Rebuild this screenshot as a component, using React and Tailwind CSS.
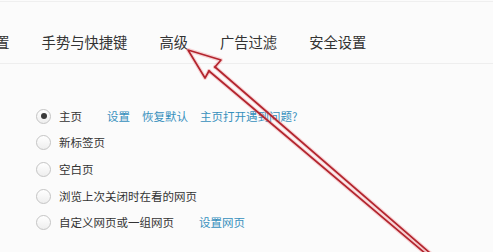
import React from "react";

const tabs = ["设置", "手势与快捷键", "高级", "广告过滤", "安全设置"];

const options = [
  { label: "主页", checked: true, links: ["设置", "恢复默认", "主页打开遇到问题?"] },
  { label: "新标签页" },
  { label: "空白页" },
  { label: "浏览上次关闭时在看的网页" },
  { label: "自定义网页或一组网页", links: ["设置网页"] },
];

function Radio({ checked }) {
  return (
    <span className="w-[15px] h-[15px] rounded-full border border-[#c4c4c4] bg-gradient-to-b from-white to-[#eeeeee] flex items-center justify-center shrink-0">
      {checked && <span className="w-[6px] h-[6px] rounded-full bg-[#3a3a3a]" />}
    </span>
  );
}

function Arrow() {
  return (
    <svg className="absolute inset-0 pointer-events-none" width="493" height="252" viewBox="0 0 493 252">
      <g fill="none" strokeLinejoin="round" strokeLinecap="round">
        <g stroke="rgba(235,90,100,0.25)" strokeWidth="4">
          <path d="M209 71 L205 78 L188 50 L221 60 L215 67" />
          <path d="M209 71 L426 254" />
          <path d="M215 67 L430 253" />
        </g>
        <g stroke="#b3252e" strokeWidth="1.7">
          <path d="M209 71 L205 78 L188 50 L221 60 L215 67" />
          <path d="M209 71 L426 254" />
          <path d="M215 67 L430 253" />
        </g>
      </g>
    </svg>
  );
}

export default function App() {
  return (
    <div
      className="relative w-[493px] h-[252px] overflow-hidden bg-[#fbfbfb] text-[#333]"
      style={{ fontFamily: '"Noto Sans CJK SC", "Noto Sans", sans-serif' }}
    >
      <div className="h-[1px] mt-[1px] bg-[#efefef]" />

      {/* 标签栏 */}
      <div className="flex gap-[32px] pt-[30px] pb-[11px] -ml-[19px] border-b border-[#eeeeee] whitespace-nowrap">
        {tabs.map((t) => (
          <span key={t} className="text-[14.3px] leading-[20px] text-[#333]">{t}</span>
        ))}
      </div>

      {/* 启动选项 */}
      <div className="pt-[39px] pl-[36px]">
        {options.map((o) => (
          <div key={o.label} className="flex items-center h-[26.65px] text-[11.5px] whitespace-nowrap">
            <Radio checked={o.checked} />
            <span className="ml-[8px]">{o.label}</span>
            {o.links && (
              <div className="flex gap-[12px] ml-[25px] text-[#3690bd]">
                {o.links.map((l) => (
                  <span key={l}>{l}</span>
                ))}
              </div>
            )}
          </div>
        ))}
      </div>

      <Arrow />
    </div>
  );
}
